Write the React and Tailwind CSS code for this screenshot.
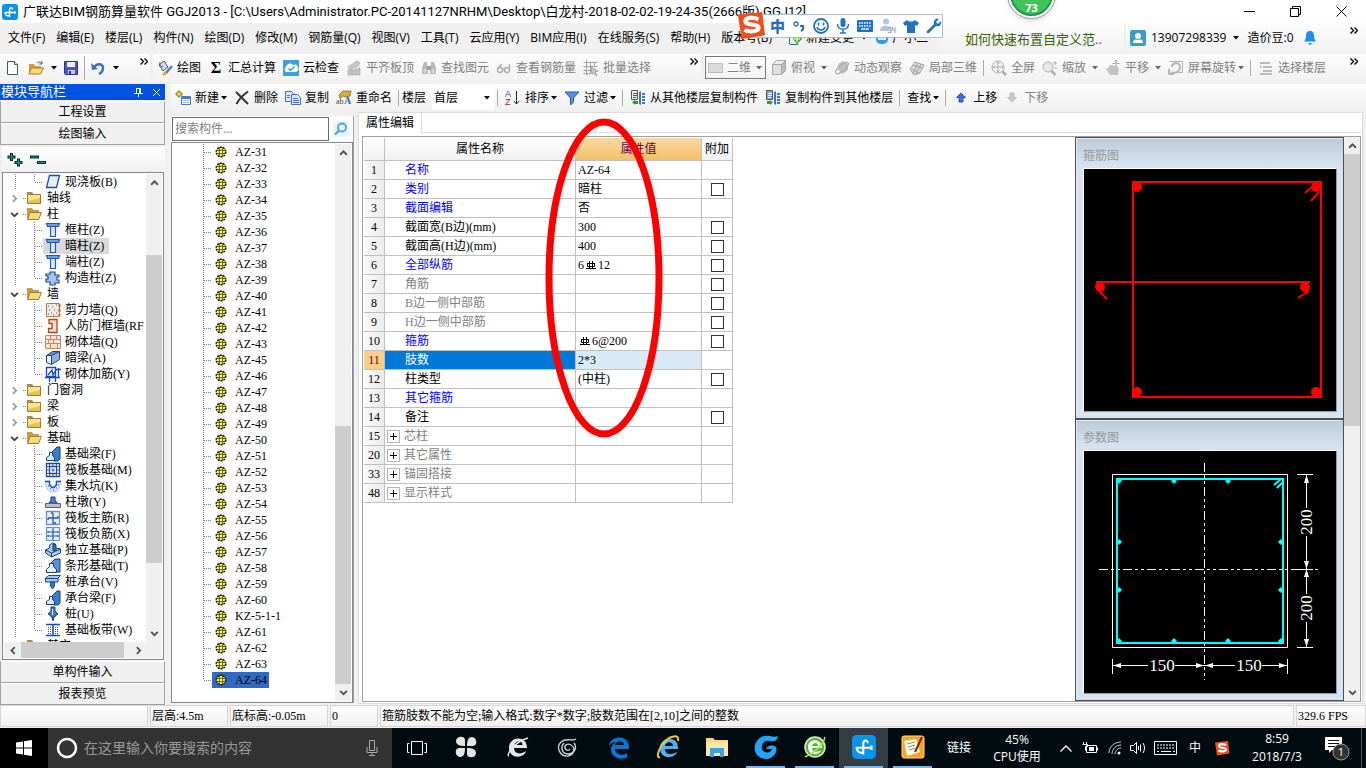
import clsx from "clsx";

const UI_FONT = "font-['Open_Sans','Noto_Sans_CJK_SC',sans-serif]";
const SONG_FONT = "font-['Liberation_Serif','Noto_Sans_CJK_SC',serif]";

const icons = {
  app: (
    <>
      <rect width="16" height="16" rx="3" fill="#0a93ea" />
      <path d="M7.500 13V6c0-3 3-3 3-.500M3 8.500h10M3 8c0 2.500 1 4 4.500 4M13 7v3" stroke="#fff" strokeWidth="1.400" fill="none" />
    </>
  ),
  newFile: (
    <>
      <path d="M2.500 1.500h7l3 3v10h-10z" fill="#fff" stroke="#46546e" />
      <path d="M9.500 1.500v3h3" fill="#dde6f3" stroke="#46546e" />
    </>
  ),
  open: (
    <>
      <path d="M1 4h5l1 2h6v8H1z" fill="#d99b32" />
      <path d="M3.500 8h12l-3 6H1z" fill="#fcdc7e" stroke="#b07a1c" />
      <path d="M9 3c2-2 4-1 5 1M14 1v3h-3" fill="none" stroke="#49618e" />
    </>
  ),
  save: (
    <>
      <path d="M1.500 1.500h13v13h-12l-1-1z" fill="#4a56c4" stroke="#2b3290" />
      <path d="M4 2h8v5H4z" fill="#e9edfb" />
      <path d="M5 10h7v4H5z" fill="#c4cbea" />
      <path d="M6 11h2v3H6z" fill="#2b3290" />
    </>
  ),
  undo: (
    <>
      <path d="M4 8C6 3 13 3 13 8c0 3-2 5-4 6" fill="none" stroke="#3c6fc4" strokeWidth="2.400" />
      <path d="M1 3l1 7 6-1z" fill="#3c6fc4" />
    </>
  ),
  draw: (
    <>
      <path d="M2 5l5-4 4 6-5 4z" fill="#cfdcf0" stroke="#3f5676" />
      <path d="M3 2c-1 2 0 4 3 5" fill="none" stroke="#3f5676" />
      <path d="M15 6l-6 7" stroke="#4a7fd0" strokeWidth="2.500" />
      <path d="M6 15c0-2 2-4 4-3 0 2-2 3-4 3z" fill="#e5b52e" stroke="#8c6a12" strokeWidth=".5" />
    </>
  ),
  cloud: (
    <>
      <rect width="16" height="16" fill="#3aa0e0" />
      <path d="M3 12a3 3 0 010-5 4 4 0 017-2 3.500 3.500 0 013 7z" fill="#fff" />
      <path d="M5.500 8.500l2 2 4-4" fill="none" stroke="#3aa0e0" strokeWidth="1.500" />
    </>
  ),
  align: (
    <g fill="#c8c8c8" stroke="#a5a5a5" strokeWidth=".7">
      <path d="M2 7l9-6 3 2-2 3-8 4z" />
      <path d="M2 10h6v2H5v1h3v2H2zM9 9h2v6H9zM12 8h2v7h-2z" />
    </g>
  ),
  binoculars: (
    <g fill="#b8b8b8">
      <path d="M3 2h3v3l1 2v7H1V8zM10 2h3l2 6v6H9V7l1-2z" />
      <path d="M6 6h4v4H6z" fill="#9c9c9c" />
      <path d="M2.500 9h3v4h-3zM10.500 9h3v4h-3z" fill="#d6d6d6" />
    </g>
  ),
  glasses: (
    <g fill="none" stroke="#a8a8a8" strokeWidth="1.300">
      <circle cx="4" cy="10" r="2.500" />
      <circle cx="11" cy="10" r="2.500" />
      <path d="M6.500 9.500h2M2 8l4-4M13.500 9V4" />
    </g>
  ),
  batch: (
    <g fill="none" stroke="#a4a4a4">
      <path d="M.500 2.500h14M.500 6.500h14M.500 10.500h8M3.500 0v15M7.500 2v12M11.500 2v5M.500 13.500h7" />
      <path d="M8 7l7 4-3 1 2 3-1 1-2-3-2 1z" fill="#c9c9c9" />
    </g>
  ),
  flat: <rect x=".5" y="3.500" width="14" height="9" fill="#dadada" stroke="#bdbdbd" />,
  cube: (
    <g stroke="#a6a6a6" strokeLinejoin="round">
      <path d="M1.500 4.500h9v10h-9z" fill="#dedede" />
      <path d="M1.500 4.500l4-4h9l-4 4z" fill="#efefef" />
      <path d="M10.500 4.500l4-4v10l-4 4z" fill="#bcbcbc" />
    </g>
  ),
  orbit: (
    <>
      <path d="M4 4l5-3 5 3v6l-5 4-5-4z" fill="#c0c0c0" />
      <ellipse cx="8" cy="8" rx="8" ry="3" transform="rotate(-40 8 8)" fill="none" stroke="#a9a9a9" />
    </>
  ),
  local3d: (
    <g fill="#d8d8d8" stroke="#a3a3a3">
      <path d="M1 9l5-7 9 3-4 8-6 2z" />
      <path d="M4 5l9 3M3 9l7 4M9 3l-5 11M12 4l-5 10" fill="none" />
    </g>
  ),
  full: (
    <g fill="none" stroke="#aaa">
      <circle cx="7" cy="7" r="6" />
      <path d="M7 2v10M2 7h10M5.500 3.500L7 2l1.500 1.500M5.500 10.500L7 12l1.500-1.500M3.500 5.500L2 7l1.500 1.500M10.500 5.500L12 7l-1.500 1.500" />
      <path d="M11.500 11.500l3.500 3.500" strokeWidth="2.500" />
    </g>
  ),
  zoom: (
    <g fill="none" stroke="#b0b0b0">
      <circle cx="6" cy="7" r="5" fill="#e8e8e8" />
      <path d="M9.500 11l4 4" strokeWidth="2.500" />
      <path d="M11 3h4M13 1v4M12 8h3" />
    </g>
  ),
  pan: (
    <g fill="#c2c2c2">
      <path d="M1 9l3-2 1-2 7 1 2 3-1 6H5z" />
      <path d="M7.500 3.500h7M11 0v7M9.500 1.500L11 0l1.500 1.500" fill="none" stroke="#a8a8a8" />
    </g>
  ),
  rotate: (
    <g fill="none" stroke="#b3b3b3">
      <path d="M1.500 1.500h13v11h-5" />
      <path d="M4 7c0-5 8-5 8 0s-6 7-9 5M1 9v5h5" strokeWidth="1.800" />
    </g>
  ),
  floors: <path d="M2 2h10v2H2zM5 6h9v2H5zM5 10h9v2H5zM2 13h12v2H2zM2 4v4h2" fill="#bababa" />,
  create: (
    <>
      <path d="M6.500 6.500h9v8h-9z" fill="#fff" stroke="#4c79c0" />
      <path d="M7 7h8v2H7z" fill="#4c79c0" />
      <path d="M8 10.500h3m1 0h2m-6 2h3m1 0h2" stroke="#8fb1e2" />
      <path d="M3 1h2v2h2v2H5v2H3V5H1V3h2z" fill="#ffe34d" stroke="#7d6500" strokeWidth=".8" />
    </>
  ),
  remove: <path d="M2 2l12 12M14 1.500C9 5 5 9 2.500 14" stroke="#333" strokeWidth="2" fill="none" />,
  copy: (
    <g fill="#dbe7fa" stroke="#4370b8">
      <path d="M.500 1.500h6l2 2v8h-8z" />
      <path d="M6.500 4.500h6l3 3v7h-9z" />
      <path d="M8 8.500h5M8 10.500h6M8 12.500h6M2 5.500h3M2 7.500h3" />
    </g>
  ),
  rename: (
    <>
      <path d="M3 5l4-4h8l-1 5-4 1-3-1-3 2z" fill="#d9aa3c" stroke="#795b14" strokeWidth=".7" />
      <text x="0" y="14" fontSize="8" fill="#444" fontFamily="Liberation Serif">ab</text>
      <text x="8" y="14" fontSize="10" fill="#2f65c0" fontWeight="bold" fontFamily="Liberation Serif">A</text>
    </>
  ),
  sort: (
    <>
      <text x="0" y="7" fontSize="9" fill="#2757b5" fontFamily="Liberation Sans">A</text>
      <text x="0" y="15" fontSize="9" fill="#a3222c" fontFamily="Liberation Sans">Z</text>
      <path d="M11.500 1v13M9 11l2.500 3 2.500-3" stroke="#222" fill="none" />
    </>
  ),
  filter: <path d="M1 2h14L9.500 8v4l-3 3V8z" fill="#5b8fe0" stroke="#2b5cb0" />,
  copyFrom: (
    <>
      <path d="M1.500.500h6v9h-6z" fill="#eee" stroke="#555" />
      <path d="M3 3.500h4M3 5.500h4M3 7.500h3" stroke="#555" />
      <path d="M9 2l2-1v14l-2-1zM12 3h3v2h-3zM12 6h3v2h-3zM12 9h3v2h-3zM12 12h3v2h-3z" fill="#3e73c6" />
      <path d="M2 12l3-2v1h3v3H5v1z" fill="#2f9a3a" />
    </>
  ),
  copyTo: (
    <>
      <path d="M1.500.500h6v9h-6z" fill="#7fa3dd" stroke="#555" />
      <path d="M3 3.500h4M3 5.500h4M3 7.500h3" stroke="#fff" />
      <path d="M9 2l2-1v14l-2-1zM12 3h3v2h-3zM12 6h3v2h-3zM12 9h3v2h-3zM12 12h3v2h-3z" fill="#3e73c6" />
      <path d="M8 12.500l-3-2.500v1H2v3h3v1z" fill="#2f9a3a" />
    </>
  ),
  up: <path d="M8 3l4.500 4.500H10V12H6V7.500H3.500z" fill="#3f6fe0" stroke="#1b3fa0" strokeWidth=".8" />,
  down: <path d="M8 12L3.500 7.500H6V3h4v4.500h2.500z" fill="#c9c9c9" stroke="#b5b5b5" strokeWidth=".8" />,
  user: (
    <>
      <rect width="16" height="16" rx="2" fill="#3a9bd0" />
      <circle cx="8" cy="6" r="3" fill="#fff" />
      <path d="M3 13c0-4 3-4 5-3 2-1 5-1 5 3z" fill="#fff" />
    </>
  ),
  bell: <path d="M8 1c3 0 4 2 4 5 0 3 1 4 2 5.500H2C3 10 4 9 4 6c0-3 1-5 4-5zM6 13h4L8 15.500z" fill="#1d8cf0" />,
  change: (
    <>
      <path d="M2 14.500h8M1.500 3v11" stroke="#2b6d8f" fill="none" />
      <path d="M9 4l5 5-5 5-4-5z" fill="#43a52b" />
      <path d="M9 6v6M6 9h6" stroke="#c9f5a0" strokeWidth="1.500" />
    </>
  ),
  helper: (
    <>
      <path d="M1 3l3 2h8l3-2-1 6c0 4-3 5-6 5S2 13 2 9z" fill="#2f9be8" />
      <path d="M4 7h8v3H4z" fill="#d8efff" />
    </>
  ),
  search: (
    <>
      <rect width="16" height="16" fill="#e4f3fc" />
      <circle cx="9" cy="6.500" r="4" fill="none" stroke="#4aa3dc" strokeWidth="1.800" />
      <path d="M6 9.500L2 13.500" stroke="#4aa3dc" strokeWidth="2.200" />
    </>
  ),
  folder: (
    <>
      <path d="M1 2h5l1.500 2H15v10H1z" fill="#a98a52" />
      <path d="M1.500 4.500h13v9h-13z" fill="#eec04d" stroke="#a77c2a" />
      <path d="M2 5h12v3l-12 3z" fill="#fbe499" />
    </>
  ),
  folderOpen: (
    <>
      <path d="M1 2h5l1.500 2H13v9H1z" fill="#c49a4c" />
      <path d="M4 6.500h11.500l-3 7H1.500z" fill="#fbdc82" stroke="#a77c2a" />
    </>
  ),
  slab: <path d="M4.500 1.500h10l-3 12h-10z" fill="#e4eefc" stroke="#1c4fa5" strokeWidth="1.300" />,
  column: (
    <g fill="#dce9fc" stroke="#1c58b4" strokeWidth="1.200">
      <path d="M1.500 1.500h13l-1 3h-11z" fill="#6b9de0" />
      <path d="M5.500 4.500h5v10h-5z" />
    </g>
  ),
  tieColumn: <path d="M5 2h5v3h4v2h-2v3h2v3h-4v2H5v-3H1V9h2V6H1V4h4z" fill="#a8c4ee" stroke="#1c4a8c" strokeWidth="1.200" />,
  shearWall: (
    <>
      <path d="M1.500 1.500h13v13h-13z" fill="#f2ebe5" stroke="#c77046" />
      <path d="M3 4h1m3 1h1m3-2h1M4 8h1m4 0h1M6 11h1m4 0h1m-9 1h1m4 1h1" stroke="#555" />
      <path d="M14.500 2v12" stroke="#d05d1d" strokeWidth="2" strokeDasharray="3 2" />
    </>
  ),
  doorWall: <path d="M4 1.500h8v13H3.500v-4H7v-5H4z" fill="#f8dcc7" stroke="#a8491b" strokeWidth="1.300" />,
  brick: (
    <>
      <path d="M.500 1.500h15v13H.500z" fill="#fbe3d3" stroke="#d08659" />
      <path d="M1 5.500h14M1 9.500h14M5.500 2v3M11.500 2v3M8.500 6v3M3.500 6v3M5.500 10v4M12.500 10v4" stroke="#d08659" />
    </>
  ),
  hiddenBeam: (
    <g stroke="#1f4377">
      <path d="M1.500 5.500l6-4h7l-5 4z" fill="#6d92c4" />
      <path d="M1.500 5.500h5v9l-5-2z" fill="#e7f0fd" />
      <path d="M6.500 5.500l8-4v8l-8 5z" fill="#8fb2e2" />
    </g>
  ),
  wallBar: (
    <g fill="none" stroke="#1746c0" strokeWidth="1.300">
      <path d="M1.500 1.500h9v9h-9zM0 11.500h15M10 3.500h6M13.500 2v10M4.500 11v5M10.500 8v8" />
      <path d="M3 9l4-5 1 5 3-5" />
    </g>
  ),
  footBeam: (
    <g stroke="#123f7d">
      <path d="M7 6l5-5h3v12l-2 2H9z" fill="#3c7cc4" />
      <path d="M1.500 14.500v-3l3-2v-3h3v3l2 2v3z" fill="#d9e9fb" />
    </g>
  ),
  raft: (
    <g fill="none" stroke="#164a94" strokeWidth="1.300">
      <path d="M1.500 1.500h13v13h-13zM4.500 4.500h7v7h-7z" />
      <path d="M1 8h3M12 8h3M8 1v3M8 12v3M1 4.500h3M12 4.500h3M1 11.500h3M12 11.500h3M4.500 1v3M11.500 1v3M4.500 12v3M11.500 12v3M8 6v4M6 8h4" strokeWidth=".8" />
    </g>
  ),
  pit: (
    <>
      <path d="M1 3h4v3l2 2h2l2-2V3h4c1 7-2 11-7 11S0 10 1 3z" fill="#dfe9fa" stroke="#8aa6d4" strokeWidth=".6" />
      <path d="M0 3.500h4.500V7L7 9.500h2L11.500 7V3.500H16" fill="none" stroke="#1c52b8" strokeWidth="1.300" />
      <path d="M3 8h1m1 3h1m2 1h1m2-2h1m1-3h1" stroke="#1c52b8" />
    </>
  ),
  pier: (
    <>
      <path d="M6 3h4v3l2 3H4l2-3z" fill="#4f84cc" stroke="#163f7c" />
      <path d="M.500 9.500h15v4H.500z" fill="#b9bfc8" stroke="#59626e" />
    </>
  ),
  mainBar: (
    <g fill="none" stroke="#1e56c4" strokeWidth="1.300">
      <path d="M1.500 1.500h13v13h-13z" fill="#eaf1fd" stroke="#6b90d6" />
      <path d="M8 3v10h3M3 8h10V6M3 8v2M8 3H6" />
    </g>
  ),
  negBar: (
    <g fill="none" stroke="#1e56c4" strokeWidth="1.200">
      <path d="M1.500 1.500h13v13h-13z" fill="#eaf1fd" stroke="#6b90d6" />
      <path d="M8 2v12M3 6h10M3 10h10M3 5v2M13 5v2M3 9v2M13 9v2" />
    </g>
  ),
  isolated: (
    <g stroke="#123f7d">
      <path d="M.500 8l4-2V3l3-2 3 1v4l5 1v4l-9 4-6-4z" fill="#a9c9ee" />
      <path d="M.500 8l6 3 9-4M6.500 11v4" fill="none" />
      <path d="M8 2l3 1v5l-3 1z" fill="#3b73b9" />
    </g>
  ),
  strip: (
    <g stroke="#123f7d">
      <path d="M6 5l4-4h5v13h-3z" fill="#5d90cf" />
      <path d="M1.500 14.500v-3l3-3V5.500h4v3l3 3v3z" fill="#e3effc" />
    </g>
  ),
  pileCap: (
    <g stroke="#15488f">
      <path d="M.500 4l3-2.500h12L13 4v4H.500z" fill="#a9c8ef" />
      <path d="M.500 4.500H13" />
      <path d="M5.500 8h4v4L7.500 15l-2-3z" fill="#3a78c4" />
    </g>
  ),
  pile: (
    <>
      <path d="M6 1h4v4l3 3-3 2v1h-1l-1 4-1-4H6v-1L3 8l3-3z" fill="#3f7cc2" stroke="#123f7d" />
      <path d="M7 3h1v6H7z" fill="#d5e6fa" />
    </>
  ),
  band: (
    <>
      <path d="M1 2.500h14M1 13.500h14M8 3v10" stroke="#1647c0" strokeWidth="1.600" />
      <path d="M3.500 5v7M5.500 5v7M10.500 5v7M12.500 5v7" stroke="#555" strokeDasharray="1 1" />
    </>
  ),
  gear: (
    <>
      <circle cx="8" cy="8" r="4.500" fill="#f5ee2c" />
      <circle cx="8" cy="8" r="4.800" fill="none" stroke="#111" strokeWidth="1.500" strokeDasharray="1.900 1.100" />
      <path d="M6.500 3v10M9.500 3v10M3 6.500h10M3 9.500h10" stroke="#3c3900" strokeWidth=".7" />
      <rect x="7" y="7" width="2" height="2" fill="#fff" />
    </>
  ),
  sogou: (
    <>
      <path d="M1 2.500L14 1l1.500 12.500L3 15.500z" fill="#f04e1c" />
      <path d="M12 5c-3-1.500-7-1-7 1 0 2.500 7 1 7 3.500 0 2-5 2.500-7.500 1" fill="none" stroke="#fff" strokeWidth="2.200" />
    </>
  ),
};

function Icon({ name, className = "size-4" }) {
  return (
    <svg viewBox="0 0 16 16" className={clsx("shrink-0", className)} aria-hidden="true">
      {icons[name]}
    </svg>
  );
}

function Caret({ className = "text-black" }) {
  return (
    <svg viewBox="0 0 6 4" className={clsx("h-1 w-[6px] shrink-0", className)} aria-hidden="true">
      <path d="M0 0h6L3 3.500z" fill="currentColor" />
    </svg>
  );
}

function More({ className = "mr-2" }) {
  return (
    <button type="button" aria-label="更多" className={clsx("ml-auto h-3 self-start", className)}>
      <svg viewBox="0 0 8 7" className="mt-[3px] h-[7px] w-2">
        <path d="M.500 .5l3 3-3 3M4.500 .5l3 3-3 3" fill="none" stroke="#000" strokeWidth="1.400" />
      </svg>
    </button>
  );
}

function Sep() {
  return <span className="mx-[3px] h-4 w-px shrink-0 bg-[#a9a9a9]" />;
}

function ToolButton({ icon, label, caret, wide, disabled, sigma }) {
  return (
    <button type="button" disabled={disabled} className={clsx("flex shrink-0 items-center gap-1 pr-[3px] pl-1 whitespace-nowrap", disabled ? "text-[#808080]" : "text-black")}>
      {icon && <Icon name={icon} />}
      {sigma && <span className="w-4 font-['Liberation_Serif',serif] text-base leading-4 font-bold">Σ</span>}
      <span className={clsx("flex items-center", wide ? "gap-[6px]" : "gap-[2px]")}>
        {label}
        {caret && <Caret className={disabled ? "text-[#666]" : "text-black"} />}
      </span>
    </button>
  );
}

const BAR = "flex items-center bg-linear-to-b from-[#fdfdfd] to-[#f0f0f0]";

const menus = [
  "文件(F)", "编辑(E)", "楼层(L)", "构件(N)", "绘图(D)", "修改(M)", "钢筋量(Q)", "视图(V)",
  "工具(T)", "云应用(Y)", "BIM应用(I)", "在线服务(S)", "帮助(H)", "版本号(B)",
];

function TitleBar() {
  return (
    <header className="flex h-[23px] shrink-0 items-center bg-white pl-[2px]">
      <Icon name="app" />
      <h1 className="ml-[5px] font-['Roboto','Noto_Sans_CJK_SC',sans-serif] text-[13px] whitespace-nowrap">
        {"广联达BIM钢筋算量软件 GGJ2013 - [C:\\Users\\Administrator.PC-20141127NRHM\\Desktop\\白龙村-2018-02-02-19-24-35(2666版).GGJ12]"}
      </h1>
      <div className="mr-[19px] ml-auto flex gap-[35px]">
        <button type="button" aria-label="最小化">
          <svg viewBox="0 0 11 11" className="size-[11px]"><path d="M0 5.500h11" stroke="#000" /></svg>
        </button>
        <button type="button" aria-label="还原">
          <svg viewBox="0 0 11 11" className="size-[11px]"><path d="M.500 2.500h8v8h-8zM2.500 2V.500h8v8H9" fill="none" stroke="#000" /></svg>
        </button>
        <button type="button" aria-label="关闭">
          <svg viewBox="0 0 11 11" className="size-[11px]"><path d="M.500 .5l10 10M10.500 .5l-10 10" stroke="#000" /></svg>
        </button>
      </div>
    </header>
  );
}

function MenuBar() {
  return (
    <nav className="flex h-[31px] shrink-0 items-stretch">
      <div className="flex w-[937px] shrink-0 items-center gap-px overflow-hidden pb-[2px] pl-[3px] whitespace-nowrap">
        {menus.map((menu) => (
          <button key={menu} type="button" className="px-[5px]">{menu}</button>
        ))}
        <button type="button" className="ml-[10px] flex items-center gap-[2px]">
          <Icon name="change" />
          新建变更
        </button>
        <span className="mx-[6px]"><Caret /></span>
        <button type="button" className="flex items-center gap-[2px]">
          <Icon name="helper" />
          广小二
        </button>
      </div>
      <div className={clsx(BAR, "w-[187px] shrink-0 pl-7")}>
        <a href="#tips" className="text-[13px] whitespace-nowrap text-[#336600]">如何快速布置自定义范..</a>
      </div>
      <div className={clsx(BAR, "ml-[2px] flex-1 pb-[2px] pl-1 whitespace-nowrap")}>
        <Icon name="user" />
        <button type="button" className="ml-[5px] flex items-center gap-[7px]">13907298339 <Caret /></button>
        <span className="ml-2">造价豆:0</span>
        <button type="button" aria-label="通知" className="ml-2"><Icon name="bell" /></button>
        <More />
      </div>
    </nav>
  );
}

function MainToolbar() {
  return (
    <div className="flex h-[30px] shrink-0 gap-[3px]">
      <div className={clsx(BAR, "w-[150px] shrink-0 pb-[3px] pl-[5px]")}>
        <button type="button" aria-label="新建"><Icon name="newFile" /></button>
        <button type="button" aria-label="打开" className="ml-[7px] flex items-center gap-[7px]"><Icon name="open" /><Caret /></button>
        <button type="button" aria-label="保存" className="ml-[6px]"><Icon name="save" /></button>
        <span className="mx-[5px] h-6 w-px bg-[#a9a9a9]" />
        <button type="button" aria-label="撤销" className="flex items-center gap-[7px]"><Icon name="undo" /><Caret /></button>
        <More className="mr-[2px]" />
      </div>
      <div className={clsx(BAR, "w-[548px] shrink-0 pb-[3px]")}>
        <ToolButton icon="draw" label="绘图" />
        <ToolButton sigma label="汇总计算" />
        <ToolButton icon="cloud" label="云检查" />
        <ToolButton icon="align" label="平齐板顶" disabled />
        <ToolButton icon="binoculars" label="查找图元" disabled />
        <ToolButton icon="glasses" label="查看钢筋量" disabled />
        <ToolButton icon="batch" label="批量选择" disabled />
        <More className="mr-[3px]" />
      </div>
      <div className={clsx(BAR, "min-w-0 flex-1 pb-[3px]")}>
        <label className="relative mx-px flex h-[23px] w-[61px] shrink-0 items-center border border-[#7a7a7a] pl-[2px] text-[#808080]">
          <Icon name="flat" />
          <select aria-label="视图模式" disabled className="ml-[3px] w-9 appearance-none">
            <option>二维</option>
          </select>
          <span className="absolute right-[3px]"><Caret className="text-[#666]" /></span>
        </label>
        <ToolButton icon="cube" label="俯视" caret wide disabled />
        <ToolButton icon="orbit" label="动态观察" disabled />
        <ToolButton icon="local3d" label="局部三维" disabled />
        <Sep />
        <ToolButton icon="full" label="全屏" disabled />
        <ToolButton icon="zoom" label="缩放" caret wide disabled />
        <ToolButton icon="pan" label="平移" caret wide disabled />
        <ToolButton icon="rotate" label="屏幕旋转" caret disabled />
        <Sep />
        <ToolButton icon="floors" label="选择楼层" disabled />
        <More />
      </div>
    </div>
  );
}

function EditToolbar() {
  return (
    <div className={clsx(BAR, "h-[27px] shrink-0")}>
      <ToolButton icon="create" label="新建" caret />
      <ToolButton icon="remove" label="删除" />
      <ToolButton icon="copy" label="复制" />
      <ToolButton icon="rename" label="重命名" />
      <Sep />
      <label className="relative flex shrink-0 items-center gap-[6px]">
        楼层
        <select className="h-[25px] w-[62px] appearance-none bg-white pl-[2px]">
          <option>首层</option>
        </select>
        <span className="absolute right-1"><Caret /></span>
      </label>
      <Sep />
      <ToolButton icon="sort" label="排序" caret />
      <ToolButton icon="filter" label="过滤" caret />
      <Sep />
      <ToolButton icon="copyFrom" label="从其他楼层复制构件" />
      <ToolButton icon="copyTo" label="复制构件到其他楼层" />
      <Sep />
      <ToolButton label="查找" caret />
      <Sep />
      <ToolButton icon="up" label="上移" />
      <ToolButton icon="down" label="下移" disabled />
    </div>
  );
}

const tree = [
  { label: "现浇板(B)", icon: "slab", last: true },
  { label: "轴线", group: true },
  { label: "柱", group: true, open: true },
  { label: "框柱(Z)", icon: "column" },
  { label: "暗柱(Z)", icon: "column", selected: true },
  { label: "端柱(Z)", icon: "column" },
  { label: "构造柱(Z)", icon: "tieColumn", last: true },
  { label: "墙", group: true, open: true },
  { label: "剪力墙(Q)", icon: "shearWall" },
  { label: "人防门框墙(RF", icon: "doorWall" },
  { label: "砌体墙(Q)", icon: "brick" },
  { label: "暗梁(A)", icon: "hiddenBeam" },
  { label: "砌体加筋(Y)", icon: "wallBar", last: true },
  { label: "门窗洞", group: true },
  { label: "梁", group: true },
  { label: "板", group: true },
  { label: "基础", group: true, open: true },
  { label: "基础梁(F)", icon: "footBeam" },
  { label: "筏板基础(M)", icon: "raft" },
  { label: "集水坑(K)", icon: "pit" },
  { label: "柱墩(Y)", icon: "pier" },
  { label: "筏板主筋(R)", icon: "mainBar" },
  { label: "筏板负筋(X)", icon: "negBar" },
  { label: "独立基础(P)", icon: "isolated" },
  { label: "条形基础(T)", icon: "strip" },
  { label: "桩承台(V)", icon: "pileCap" },
  { label: "承台梁(F)", icon: "footBeam" },
  { label: "桩(U)", icon: "pile" },
  { label: "基础板带(W)", icon: "band", last: true },
  { label: "其它", group: true },
];

function Chevron({ dir, className = "text-[#505050]" }) {
  const paths = { up: "M1 6l3-3 3 3", down: "M1 2.500l3 3 3-3", left: "M6 1L3 4l3 3", right: "M2.500 1l3 3-3 3" };
  return (
    <svg viewBox="0 0 8 8" className={clsx("size-[9px] shrink-0", className)} aria-hidden="true">
      <path d={paths[dir]} fill="none" stroke="currentColor" strokeWidth="1.600" />
    </svg>
  );
}

function TreeRow({ item }) {
  if (item.group) {
    return (
      <li className="flex h-4 items-center pl-[6px]">
        <Chevron dir={item.open ? "down" : "right"} className={item.open ? "text-[#404040]" : "text-[#a0a0a0]"} />
        <span className="ml-1 w-[3px] border-t border-dotted border-[#808080]" />
        <button type="button" className="flex h-4 items-center gap-[5px]">
          <Icon name={item.open ? "folderOpen" : "folder"} />
          {item.label}
        </button>
      </li>
    );
  }
  return (
    <li className="flex h-4 items-center pl-[11px]">
      <svg viewBox="0 0 28 16" className="h-4 w-7 shrink-0" aria-hidden="true">
        <path d={item.last ? "M.500 0v16M19.500 0v8M20 8.500h8" : "M.500 0v16M19.500 0v16M20 8.500h8"} stroke="#808080" strokeDasharray="1 1" />
      </svg>
      <button type="button" className={clsx("flex h-4 items-center gap-1 pr-[5px] pl-[2px] whitespace-nowrap", item.selected && "bg-[#d9d9d9]")}>
        <Icon name={item.icon} />
        {item.label}
      </button>
    </li>
  );
}

function ScrollBar({ before, thumb, after }) {
  return (
    <div className="flex w-4 shrink-0 flex-col items-center bg-[#f0f0f0]">
      <button type="button" aria-label="向上滚动" className="flex h-[17px] items-center"><Chevron dir="up" /></button>
      <div className={before} />
      <div className={clsx("w-full bg-[#cdcdcd]", thumb)} />
      <div className={after} />
      <button type="button" aria-label="向下滚动" className="flex h-[17px] items-center"><Chevron dir="down" /></button>
    </div>
  );
}

function PanelButton({ children }) {
  return (
    <button type="button" className="h-[22px] w-full shrink-0 border border-t-white border-r-[#a0a0a0] border-b-[#a0a0a0] border-l-[#a0a0a0] bg-[#f0f0f0] text-center leading-5">
      {children}
    </button>
  );
}

function NavigationPanel() {
  return (
    <aside className="flex w-[165px] shrink-0 flex-col">
      <div className="flex h-[16px] shrink-0 items-center bg-[#0052e3] pl-px text-white">
        <h2 className="text-[13px] leading-4">模块导航栏</h2>
        <button type="button" aria-label="固定" className="ml-auto">
          <svg viewBox="0 0 9 9" className="size-[9px]"><path d="M2.500 0v5M6.500 0v5M2 .5h5M0 5.500h9M4.500 6v3M5.500 1v4" stroke="#fff" fill="none" /></svg>
        </button>
        <button type="button" aria-label="关闭面板" className="mr-1 ml-[9px]">
          <svg viewBox="0 0 9 9" className="size-[9px]"><path d="M1 1l7 7M8 1l-7 7" stroke="#fff" /></svg>
        </button>
      </div>
      <div className="mt-px">
        <PanelButton>工程设置</PanelButton>
        <PanelButton>绘图输入</PanelButton>
      </div>
      <div className="mt-[2px] ml-[2px] flex h-[25px] shrink-0 items-center gap-[7px] bg-linear-to-b from-white to-[#f0f0f0] pl-[5px]">
        <button type="button" aria-label="全部展开">
          <svg viewBox="0 0 16 16" className="size-4"><path d="M4.500 1v8M.500 5h8M11.500 6.500v8M7.500 10.500h8" stroke="#002b2b" strokeWidth="3" /><path d="M4.500 2v6M1.500 5h6M11.500 7.500v6M8.500 10.500h6" stroke="#12a08c" /></svg>
        </button>
        <button type="button" aria-label="全部折叠">
          <svg viewBox="0 0 16 16" className="size-4"><path d="M0 5h9M7 10.500h9" stroke="#002b2b" strokeWidth="3" /><path d="M1 5h7M8 10.500h7" stroke="#12a08c" /></svg>
        </button>
      </div>
      <div className="mr-px ml-[2px] flex min-h-0 flex-1 flex-col border border-[#828790] bg-white p-px">
        <div className="flex min-h-0 flex-1">
          <ul className="min-w-0 flex-1 overflow-hidden">
            {tree.map((item) => (
              <TreeRow key={item.label} item={item} />
            ))}
          </ul>
          <ScrollBar before="flex-[64]" thumb="flex-[306]" after="flex-[62]" />
        </div>
        <div className="flex h-4 shrink-0 items-center bg-[#f0f0f0] pr-[19px] pl-1">
          <button type="button" aria-label="向左滚动"><Chevron dir="left" /></button>
          <div className="ml-1 h-full flex-1 bg-[#cdcdcd]" />
          <button type="button" aria-label="向右滚动" className="ml-[10px]"><Chevron dir="right" /></button>
        </div>
      </div>
      <div className="mt-px shrink-0">
        <PanelButton>单构件输入</PanelButton>
        <PanelButton>报表预览</PanelButton>
      </div>
    </aside>
  );
}

const range = (from, to) => Array.from({ length: to - from + 1 }, (_, i) => `AZ-${from + i}`);
const components = [...range(31, 43), ...range(45, 60), "KZ-5-1-1", ...range(61, 64)];

function ComponentList() {
  return (
    <section className="mt-[5px] mb-[2px] flex w-[183px] shrink-0 flex-col border-r border-r-[#a0a0a0]">
      <div className="flex h-[26px] shrink-0 items-center bg-white pl-px">
        <input type="text" aria-label="搜索构件" placeholder="搜索构件..." className={clsx("h-6 w-[157px] border border-[#6b6b6b] bg-white px-[2px] pb-[2px] text-xs placeholder:text-[#808080]", UI_FONT)} />
        <button type="button" aria-label="搜索" className="ml-1"><Icon name="search" /></button>
      </div>
      <div className="flex min-h-0 flex-1 border border-[#828790] bg-white p-px">
        <ul className="min-w-0 flex-1 overflow-hidden">
          {components.map((name) => {
            const selected = name === "AZ-64";
            return (
              <li key={name} className="flex h-4 items-center pl-[30px]">
                <svg viewBox="0 0 9 16" className="h-4 w-[9px] shrink-0" aria-hidden="true">
                  <path d={selected ? "M.500 0v8M1 8.500h8" : "M.500 0v16M1 8.500h8"} stroke="#808080" strokeDasharray="1 1" />
                </svg>
                <button type="button" className={clsx("flex h-4 items-center gap-[6px] pr-[2px] pl-[1px]", selected && "bg-[#316ac5]")}>
                  <Icon name="gear" />
                  {name}
                </button>
              </li>
            );
          })}
        </ul>
        <ScrollBar before="flex-[266]" thumb="flex-[259]" after="flex-none" />
      </div>
    </section>
  );
}

const properties = [
  { no: 1, name: "名称", value: "AZ-64", tone: "key" },
  { no: 2, name: "类别", value: "暗柱", tone: "key", check: true },
  { no: 3, name: "截面编辑", value: "否", tone: "key" },
  { no: 4, name: "截面宽(B边)(mm)", value: "300", check: true },
  { no: 5, name: "截面高(H边)(mm)", value: "400", check: true },
  { no: 6, name: "全部纵筋", value: ["6", "12"], tone: "key", check: true },
  { no: 7, name: "角筋", tone: "muted", check: true },
  { no: 8, name: "B边一侧中部筋", tone: "muted", check: true },
  { no: 9, name: "H边一侧中部筋", tone: "muted", check: true },
  { no: 10, name: "箍筋", value: ["", "6@200"], tone: "key", check: true },
  { no: 11, name: "肢数", value: "2*3", selected: true },
  { no: 12, name: "柱类型", value: "(中柱)", check: true },
  { no: 13, name: "其它箍筋", tone: "key" },
  { no: 14, name: "备注", check: true },
  { no: 15, name: "芯柱", tone: "muted", expand: true },
  { no: 20, name: "其它属性", tone: "muted", expand: true },
  { no: 33, name: "锚固搭接", tone: "muted", expand: true },
  { no: 48, name: "显示样式", tone: "muted", expand: true },
];

function RebarMark() {
  return (
    <svg viewBox="0 0 10 10" className="mx-[2px] inline size-[10px] align-[-1px]" aria-label="三级钢" role="img">
      <path d="M1.500 3v3.500h7V3M1.500 3.500h7M3.500 1v8M6.500 1v8M0 8.500h10" fill="none" stroke="#000" />
    </svg>
  );
}

function PropertyValue({ value }) {
  if (Array.isArray(value)) {
    return <>{value[0]}<RebarMark />{value[1]}</>;
  }
  return value || null;
}

function PropertyRow({ row }) {
  const cell = "h-[19px] border-r border-b border-[#c0c0c0] p-0 leading-[18px]";
  const tone = row.tone === "key" ? "text-[#0000ff]" : row.tone === "muted" ? "text-[#808080]" : "text-black";
  return (
    <tr>
      <th scope="row" className={clsx(cell, "text-center font-normal", row.selected ? "bg-[#ffcf87] text-[#600040]" : "bg-linear-to-r from-[#fafafa] to-[#ececec]")}>{row.no}</th>
      <td className={clsx(cell, row.selected ? "bg-[#0078d7] text-white" : tone)}>
        <div className={clsx("flex items-center", row.expand ? "gap-1 pl-[2px]" : "pl-5")}>
          {row.expand && (
            <button type="button" aria-label={`展开${row.name}`} className="flex size-[13px] items-center justify-center border border-[#b5b5b5] bg-white">
              <svg viewBox="0 0 7 7" className="size-[7px]"><path d="M3.500 0v7M0 3.500h7" stroke="#000" /></svg>
            </button>
          )}
          <span>{row.name}</span>
        </div>
      </td>
      <td className={clsx(cell, "pl-[2px]", row.selected && "bg-[#d9e9f7]")}><PropertyValue value={row.value} /></td>
      <td className={clsx(cell, "text-center")}>
        {row.check && <input type="checkbox" aria-label={`附加${row.name}`} className="mx-auto block size-[13px] appearance-none border border-[#333] bg-white" />}
      </td>
    </tr>
  );
}

function PropertyTable() {
  const head = "border-r border-b border-[#c0c0c0] p-0 font-normal";
  return (
    <table className="w-[369px] shrink-0 table-fixed border-separate border-spacing-0">
      <colgroup>
        <col className="w-[21px]" />
        <col className="w-[191px]" />
        <col className="w-[126px]" />
        <col className="w-[31px]" />
      </colgroup>
      <thead>
        <tr className="h-[23px] bg-linear-to-b from-white to-[#f0f0f0]">
          <th aria-label="序号" className={head} />
          <th scope="col" className={head}>属性名称</th>
          <th scope="col" className={clsx(head, "bg-linear-to-b from-[#f9d9a0] to-[#f2c166] text-[#600060]")}>属性值</th>
          <th scope="col" className={head}>附加</th>
        </tr>
      </thead>
      <tbody>
        {properties.map((row) => (
          <PropertyRow key={row.no} row={row} />
        ))}
      </tbody>
    </table>
  );
}

function StirrupDrawing() {
  return (
    <svg viewBox="0 0 252 242" className="block w-full bg-black" role="img" aria-label="箍筋图">
      <g fill="none" stroke="#f00" strokeWidth="2">
        <path d="M49 13h188v215H49zM12 113h214" />
        <path d="M221 24l9-8M227 32l8-9M15 122l8 8M225 122l-11 7" />
      </g>
      {[[53, 18], [232, 18], [232, 223], [53, 223], [16, 118], [221, 118]].map(([x, y]) => (
        <circle key={`${x}-${y}`} cx={x} cy={y} r="5" fill="#f00" />
      ))}
    </svg>
  );
}

function SectionDrawing() {
  const label = { fill: "#fff", fontSize: 17, textAnchor: "middle", fontFamily: "Liberation Serif, serif" };
  return (
    <svg viewBox="0 0 252 242" className="block w-full bg-black" role="img" aria-label="参数图">
      <g fill="none" stroke="#fff">
        <path d="M28.500 23.500h175v173h-175z" />
        <path d="M120.500 12v217M15 118.500h219" strokeDasharray="9 3 3 3 3 3" />
        <path d="M213 23.500h16M213 196.500h16M222.500 24v33M222.500 85v58M222.500 171v25M216 118.500h13" />
        <path d="M28.500 208v15M203.500 208v15M29 214.500h35M91 214.500h60M178 214.500h25" />
      </g>
      <g fill="#fff">
        <path d="M222.500 24l2.500 8h-5zM222.500 118l2.500-8h-5zM222.500 118l2.500 8h-5zM222.500 196l2.500-8h-5z" />
        <path d="M29 214.500l8-2.500v5zM120 214.500l-8-2.500v5zM121 214.500l8-2.500v5zM203 214.500l-8-2.500v5z" />
      </g>
      <g fill="#0ff">
        <path d="M33 28h166v164H33z" fill="none" stroke="#0ff" strokeWidth="2" />
        <path d="M190 34l7-6M193 37l6-6" stroke="#0ff" strokeWidth="2" />
        {[[35, 30], [90, 30], [144, 30], [90, 190], [144, 190], [35, 190], [197, 190], [35, 91], [35, 139], [197, 91], [197, 139]].map(([x, y]) => (
          <path key={`${x}-${y}`} d={`M${x} ${y - 3}l3 3-3 3-3-3z`} />
        ))}
      </g>
      <text x="78" y="220" {...label}>150</text>
      <text x="165" y="220" {...label}>150</text>
      <text transform="translate(228 71) rotate(-90)" {...label}>200</text>
      <text transform="translate(228 157) rotate(-90)" {...label}>200</text>
    </svg>
  );
}

function DrawingPanel({ title, children }) {
  return (
    <section className="flex min-h-0 flex-1 flex-col border border-[#4d4d55] bg-linear-to-b from-[#bccad8] to-[#d8e3f1] to-10% pr-[6px] pb-[7px] pl-[7px] shadow-[inset_1px_1px_0_#e4ebf4]">
      <h3 className="flex h-[30px] shrink-0 items-end pb-1 text-[#999]">{title}</h3>
      <div className="border border-t-white border-r-[#999] border-b-[#999] border-l-white">{children}</div>
    </section>
  );
}

function PropertyEditor() {
  return (
    <main className="mt-px mr-[3px] mb-px flex min-w-0 flex-1 flex-col border border-[#dcdcdc] bg-white">
      <div className="flex h-5 shrink-0 items-end" role="tablist">
        <button type="button" role="tab" aria-selected="true" className="h-5 w-[63px] border-r border-[#dcdcdc] text-center">属性编辑</button>
        <div className="h-full flex-1 border-b border-[#dcdcdc]" />
      </div>
      <div className="relative mt-[3px] mr-px mb-px ml-[3px] flex min-h-0 flex-1 items-stretch border border-[#a0a0a0]">
        <div className={clsx("min-w-0 flex-1 pt-px pl-px", SONG_FONT)}>
          <PropertyTable />
        </div>
        <div className="flex w-[269px] shrink-0 flex-col">
          <DrawingPanel title="箍筋图"><StirrupDrawing /></DrawingPanel>
          <DrawingPanel title="参数图"><SectionDrawing /></DrawingPanel>
        </div>
        <ScrollBar before="flex-none" thumb="flex-[272]" after="flex-[258]" />
        <svg viewBox="0 0 120 322" className="pointer-events-none absolute -top-[20px] left-[181px] h-[322px] w-[120px]" aria-hidden="true">
          <ellipse cx="60" cy="161" rx="55" ry="156" fill="none" stroke="#f00" strokeWidth="7" />
        </svg>
      </div>
    </main>
  );
}

function StatusBar() {
  const cell = "flex items-center border border-[#d5d5d5] bg-linear-to-b from-white to-[#f0f0f0] pl-px whitespace-nowrap";
  return (
    <footer className={clsx("flex h-[23px] shrink-0 gap-[2px] pb-px", SONG_FONT)}>
      <div className={clsx(cell, "w-[148px]")} />
      <div className={clsx(cell, "w-[78px]")}>层高:4.5m</div>
      <div className={clsx(cell, "w-[98px]")}>底标高:-0.05m</div>
      <div className={clsx(cell, "w-12")}>0</div>
      <div className={clsx(cell, "flex-1")}>箍筋肢数不能为空;输入格式:数字*数字;肢数范围在[2,10]之间的整数</div>
      <div className={clsx(cell, "w-[70px]")}>329.6 FPS</div>
    </footer>
  );
}

const taskIcons = {
  fan: (
    <g fill="#e4e4e4">
      <path d="M11 11V5c0-5-9-4-9 1 0 4 4 5 9 5z" />
      <path d="M13 11h6c5 0 4-9-1-9-4 0-5 4-5 9z" />
      <path d="M13 13v6c0 5 9 4 9-1 0-4-4-5-9-5z" />
      <path d="M11 13H5c-5 0-4 9 1 9 4 0 5-4 5-9z" />
    </g>
  ),
  ieWhite: (
    <>
      <path d="M21 13H8c0 6 7 7 12 3-2 8-17 8-17-3C3 1 21 0 21 13zM8.500 10h8c0-5-7-5-8 0z" fill="#e8e8e8" />
      <path d="M3 21c-3 0 3-13 19-18" fill="none" stroke="#e8e8e8" strokeWidth="1.500" />
    </>
  ),
  swirl: <path d="M21 4c-4 3-9-2-15 3-6 6 0 15 7 14 6-1 8-8 3-11-3-2-7 0-6 3s4 3 5 1M19 8c4 6-1 11-6 11-6 0-8-7-4-11" fill="none" stroke="#d0d0d0" strokeWidth="1.400" />,
  edge: <path d="M2 11C3 0 22-1 22 12v2H8c0 6 8 7 12 4v4C13 26 3 22 4 13c1-3 3-5 5-6-3 0-5 1-7 4zm6-1h9c0-5-8-5-9 0z" fill="#0078d7" />,
  ie: (
    <>
      <path d="M22 14H9c0 6 7 6 12 3-2 7-17 8-17-4C4 1 23 0 22 14zM9 11h8c0-5-7-5-8 0z" fill="#4fb2ee" />
      <path d="M4 22C-1 24 3 10 13 3c7-3 10-2 9 3" fill="none" stroke="#f3c73d" strokeWidth="2" />
    </>
  ),
  explorer: (
    <>
      <path d="M1 3h7l2 2h13v16H1z" fill="#fbd978" />
      <path d="M1 7h22v14H1z" fill="#ffe9a2" />
      <path d="M5 13h14v9h-4v-4H9v4H5z" fill="#3aa5dc" />
    </>
  ),
  glodon: (
    <>
      <path d="M24 1c-1 5-4 6-8 5-6-1-9 3-8 8 2 5 9 4 10 0h-6c1-3 6-5 10-2 2 6-4 12-10 12C4 24-1 17 1 10 4 1 12 0 16 1c3 1 6 1 8 0z" fill="#25a4f4" />
    </>
  ),
  green: (
    <>
      <circle cx="12" cy="12" r="10" fill="#55b82c" stroke="#d9f3c8" strokeWidth="1.500" />
      <path d="M19 13H9c0 4 5 5 9 2-1 6-13 6-13-3s14-9 14 1zM9 11h6c0-4-5-4-6 0z" fill="#fff" />
      <path d="M2 22C7 20 20 12 22 2" fill="none" stroke="#a7e35f" strokeWidth="1.500" />
    </>
  ),
  note: (
    <>
      <rect x="1" y="1" width="22" height="22" rx="2" fill="#f6a51e" stroke="#ffd98e" />
      <path d="M3 6l12-2 4 13-13 4z" fill="#fffdf4" />
      <path d="M6 9l8-2M7 12l7-2M8 15l6-2" stroke="#a88747" />
      <path d="M21 2l-7 15" stroke="#7a1f14" strokeWidth="2" />
    </>
  ),
};

function TaskIcon({ name, label, active, current }) {
  return (
    <button type="button" aria-label={label} className={clsx("flex h-10 w-[49px] shrink-0 items-center justify-center", current && "bg-[#323e44]")}>
      <span className={clsx("flex h-10 w-[39px] items-center justify-center border-b-2", active ? "border-[#76b9ed]" : "border-transparent")}>
        {name === "app" ? <Icon name="app" className="size-6" /> : <svg viewBox="0 0 24 24" className="size-6" aria-hidden="true">{taskIcons[name]}</svg>}
      </span>
    </button>
  );
}

function Taskbar() {
  return (
    <footer className="flex h-10 shrink-0 items-center bg-[#020c10] text-white">
      <button type="button" aria-label="开始" className="flex h-full w-12 shrink-0 items-center justify-center bg-black">
        <svg viewBox="0 0 16 16" className="size-4"><path d="M0 2.500l7-1v6H0zM8 1.300L16 0v7.500H8zM0 8.500h7v6l-7-1zM8 8.500h8V16l-8-1.200z" fill="#fff" /></svg>
      </button>
      <label className="flex h-full w-[344px] shrink-0 items-center bg-[#333] pr-[14px] pl-2">
        <svg viewBox="0 0 22 22" className="size-[22px] shrink-0" aria-hidden="true"><circle cx="11" cy="11" r="9" fill="none" stroke="#fff" strokeWidth="2.500" /></svg>
        <input type="text" aria-label="搜索" placeholder="在这里输入你要搜索的内容" className="ml-[6px] min-w-0 flex-1 bg-transparent text-sm placeholder:text-[#999]" />
        <svg viewBox="0 0 12 16" className="h-4 w-3 shrink-0" aria-hidden="true"><path d="M3.500.500h5v10h-5zM1 7v5.500h10V7M6 13v3M3 15.500h6" fill="none" stroke="#aaa" /></svg>
      </label>
      <button type="button" aria-label="任务视图" className="flex w-[49px] shrink-0 items-center justify-center">
        <svg viewBox="0 0 20 14" className="h-[14px] w-5"><path d="M4.500.500h11v13h-11zM2.500 2.500h-2v9h2M17.500 2.500h2v9h-2" fill="none" stroke="#fff" /></svg>
      </button>
      <TaskIcon name="fan" label="360" />
      <span className="w-[3px] shrink-0" />
      <TaskIcon name="ieWhite" label="浏览器" />
      <TaskIcon name="swirl" label="广联达" />
      <span className="w-[3px] shrink-0" />
      <TaskIcon name="edge" label="Edge" />
      <TaskIcon name="ie" label="Internet Explorer" />
      <TaskIcon name="explorer" label="文件资源管理器" />
      <TaskIcon name="glodon" label="广联达G+" active />
      <TaskIcon name="green" label="360浏览器" active />
      <TaskIcon name="app" label="GGJ2013" active current />
      <TaskIcon name="note" label="便笺" active />
      <span className="ml-[10px] shrink-0">链接</span>
      <div className="mr-[20px] ml-auto flex shrink-0 items-center">
        <div className="w-[50px] text-center leading-[17px] whitespace-nowrap"><p>45%</p><p>CPU使用</p></div>
        <button type="button" aria-label="显示隐藏的图标" className="ml-[18px]">
          <svg viewBox="0 0 12 7" className="h-[7px] w-3"><path d="M.500 6.500L6 1l5.500 5.500" fill="none" stroke="#fff" strokeWidth="1.300" /></svg>
        </button>
        <svg viewBox="0 0 16 12" className="ml-[10px] h-3 w-4" aria-label="电池" role="img"><path d="M4.500 3.500h10v7h-10zM15.500 5.500v3M1.500 0v3M4.500 0v2M.500 2.500h5v2h-2v4" fill="none" stroke="#fff" /><path d="M7 5h5v4H7z" fill="#fff" /></svg>
        <svg viewBox="0 0 14 14" className="ml-[10px] size-[14px]" aria-label="网络" role="img"><path d="M1 12C1 6 6 1 13 1M4 13c0-5 4-9 9-9M7 13c0-3 3-6 6-6" fill="none" stroke="#ccc" /><circle cx="11" cy="12" r="1.500" fill="#fff" /></svg>
        <svg viewBox="0 0 16 14" className="ml-2 h-[14px] w-4" aria-label="音量" role="img"><path d="M.500 4.500h3l3-3v11l-3-3h-3zM8.500 5v4M10.500 3.500v7M13 2c2 3 2 7 0 10" fill="none" stroke="#fff" /></svg>
        <svg viewBox="0 0 23 14" className="ml-2 h-[14px] w-[23px]" aria-label="键盘" role="img"><path d="M.500.500h22v13H.500z" fill="none" stroke="#fff" /><path d="M3 4h17M3 7h17" stroke="#fff" strokeDasharray="2 1" /><path d="M3 10.500h2m2 0h10m2 0h2" stroke="#fff" /></svg>
        <span className="ml-3">中</span>
        <Icon name="sogou" className="ml-[13px] size-4" />
        <div className="ml-5 w-[54px] text-center leading-[18px]"><p>8:59</p><p>2018/7/3</p></div>
      </div>
      <button type="button" aria-label="1 条新通知" className="mr-[11px] shrink-0">
        <svg viewBox="0 0 26 26" className="size-[26px]">
          <path d="M1 2h17v13H8l-3 3v-3H1z" fill="#fff" />
          <path d="M4 5.500h11M4 8.500h11M4 11.500h7" stroke="#111" />
          <circle cx="17" cy="17" r="8" fill="#333" stroke="#999" />
          <text x="17" y="21" textAnchor="middle" fontSize="11" fill="#fff">1</text>
        </svg>
      </button>
      <span className="mr-1 h-full w-px bg-[#555]" />
    </footer>
  );
}

function ImeBar() {
  return (
    <div className="absolute top-[14px] left-[748px] flex h-6 w-[195px] items-center gap-[7px] border border-[#a9bfd6] bg-white pl-[21px] text-[#2172c4]">
      <svg viewBox="0 0 16 16" className="absolute -top-[5px] -left-[13px] size-[30px]" aria-hidden="true">{icons.sogou}</svg>
      <span className="text-[15px] leading-4 font-black">中</span>
      <svg viewBox="0 0 14 14" className="size-[14px]" aria-hidden="true"><circle cx="4" cy="5" r="2" fill="none" stroke="currentColor" strokeWidth="1.300" /><path d="M8 7h3c1 3 0 4-2 5" fill="none" stroke="currentColor" strokeWidth="2" /></svg>
      <svg viewBox="0 0 16 16" className="size-4" aria-hidden="true"><circle cx="8" cy="8" r="7" fill="none" stroke="currentColor" strokeWidth="1.800" /><path d="M5.500 4.500v3M10.500 4.500v3M4 9c1 4 7 4 8 0" fill="none" stroke="currentColor" strokeWidth="1.500" /></svg>
      <svg viewBox="0 0 14 16" className="h-4 w-[14px]" aria-hidden="true"><rect x="4.500" y="0" width="5" height="9" rx="2.500" fill="currentColor" /><path d="M1.500 6c0 7 11 7 11 0M7 11v4M4 15h6" fill="none" stroke="currentColor" strokeWidth="1.500" /></svg>
      <svg viewBox="0 0 16 12" className="h-3 w-4" aria-hidden="true"><rect width="16" height="12" rx="1" fill="currentColor" /><path d="M2 3h12M2 6h12" stroke="#fff" strokeWidth="1.400" strokeDasharray="1.500 1" /><path d="M4 9h8" stroke="#fff" strokeWidth="1.300" /></svg>
      <svg viewBox="0 0 16 16" className="size-4 text-[#b3c6db]" aria-hidden="true"><circle cx="6" cy="3.500" r="3" fill="currentColor" /><path d="M0 13c0-7 11-7 11 0z" fill="currentColor" /><path d="M8 9.500h3v5H8M12.500 9v3h3M15 9v6" fill="none" stroke="#8fa6c0" /></svg>
      <svg viewBox="0 0 16 14" className="h-[14px] w-4" aria-hidden="true"><path d="M4 1c2 2 6 2 8 0l4 3-2 3-2-1v8H4V6L2 7 0 4z" fill="currentColor" /></svg>
      <svg viewBox="0 0 16 16" className="size-4" aria-hidden="true"><path d="M1 13L8 6C7 2 10 0 13 1l-3 3 2 2 3-3c1 4-2 6-5 5l-7 7c-2 1-3-1-2-2z" fill="currentColor" /></svg>
    </div>
  );
}

function SpeedBall() {
  return (
    <div className="absolute -top-[30px] left-[1007px] flex size-[49px] items-end justify-center rounded-full border border-[#999] bg-white p-[2px] shadow-md">
      <div className="flex size-full items-end justify-center rounded-full border-2 border-[#1c9a4c] bg-[#41c45b] text-[11px] leading-3 font-bold text-white">73</div>
    </div>
  );
}

function App() {
  return (
    <div className={clsx("relative flex h-screen flex-col overflow-hidden bg-[#f0f0f0] text-xs leading-4 text-black", UI_FONT)}>
      <TitleBar />
      <MenuBar />
      <MainToolbar />
      <div className="flex min-h-0 flex-1 gap-[6px]">
        <div className={clsx("flex shrink-0", SONG_FONT)}>
          <NavigationPanel />
        </div>
        <div className="flex min-w-0 flex-1 flex-col">
          <EditToolbar />
          <div className="flex min-h-0 flex-1 gap-1">
            <div className={clsx("flex shrink-0", SONG_FONT)}>
              <ComponentList />
            </div>
            <PropertyEditor />
          </div>
        </div>
      </div>
      <StatusBar />
      <Taskbar />
      <ImeBar />
      <SpeedBall />
    </div>
  );
}

export default App;
